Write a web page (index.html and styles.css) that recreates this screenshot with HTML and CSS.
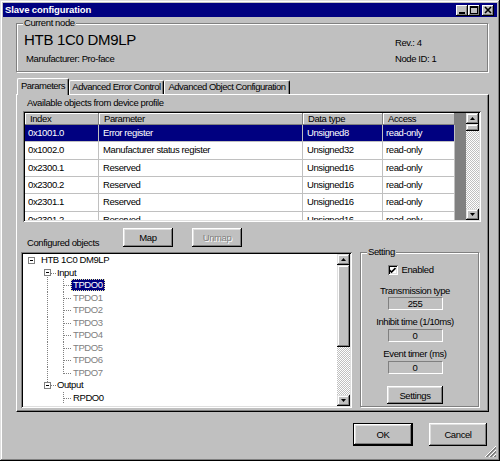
FILE: index.html
```html
<!DOCTYPE html>
<html>
<head>
<meta charset="utf-8">
<title>Slave configuration</title>
<link rel="stylesheet" href="styles.css">
</head>
<body>
<div class="window">
  <div class="titlebar">
    <span class="title">Slave configuration</span>
    <div class="caps">
      <span class="cap"><svg width="12" height="11" viewBox="0 0 12 11" shape-rendering="crispEdges"><rect x="3" y="7" width="6" height="2" fill="#000"/></svg></span>
      <span class="cap"><svg width="12" height="11" viewBox="0 0 12 11" shape-rendering="crispEdges"><rect x="2.5" y="1.5" width="7" height="7" fill="none" stroke="#000"/><rect x="2" y="1" width="8" height="2" fill="#000"/></svg></span>
      <span class="cap cap-close"><svg width="12" height="11" viewBox="0 0 12 11"><path d="M3 2 L9 8 M9 2 L3 8" stroke="#000" stroke-width="1.6" fill="none"/></svg></span>
    </div>
  </div>

  <div class="group node">
    <span class="legend">Current node</span>
    <div class="node-main">
      <div class="node-name">HTB 1C0 DM9LP</div>
      <div class="node-mfr">Manufacturer: Pro-face</div>
    </div>
    <div class="node-side">
      <div class="line">Rev.: 4</div>
      <div class="line node-id">Node ID: 1</div>
    </div>
  </div>

  <div class="tabs">
    <div class="tab active t1">Parameters</div>
    <div class="tab t2">Advanced Error Control</div>
    <div class="tab t3">Advanced Object Configuration</div>
  </div>

  <div class="panel">
    <div class="caption">Available objects from device profile</div>
    <div class="listview sunken">
      <div class="lv-body">
        <div class="lv-head">
          <div class="hc">Index</div>
          <div class="hc">Parameter</div>
          <div class="hc">Data type</div>
          <div class="hc">Access</div>
        </div>
        <div class="lv-row selected">
          <div class="c c1">0x1001.0</div><div class="c c2">Error register</div><div class="c c3">Unsigned8</div><div class="c c4">read-only</div>
        </div>
        <div class="lv-row">
          <div class="c c1">0x1002.0</div><div class="c c2">Manufacturer status register</div><div class="c c3">Unsigned32</div><div class="c c4">read-only</div>
        </div>
        <div class="lv-row">
          <div class="c c1">0x2300.1</div><div class="c c2">Reserved</div><div class="c c3">Unsigned16</div><div class="c c4">read-only</div>
        </div>
        <div class="lv-row">
          <div class="c c1">0x2300.2</div><div class="c c2">Reserved</div><div class="c c3">Unsigned16</div><div class="c c4">read-only</div>
        </div>
        <div class="lv-row">
          <div class="c c1">0x2301.1</div><div class="c c2">Reserved</div><div class="c c3">Unsigned16</div><div class="c c4">read-only</div>
        </div>
        <div class="lv-row">
          <div class="c c1">0x2301.2</div><div class="c c2">Reserved</div><div class="c c3">Unsigned16</div><div class="c c4">read-only</div>
        </div>
      </div>
      <div class="vscroll">
        <div class="sb-btn"><svg width="5" height="3" viewBox="0 0 5 3"><polygon points="0,3 2.5,0 5,3" fill="#000"/></svg></div>
        <div class="sb-thumb lv-thumb"></div>
        <div class="sb-track"></div>
        <div class="sb-btn"><svg width="5" height="3" viewBox="0 0 5 3"><polygon points="0,0 5,0 2.5,3" fill="#000"/></svg></div>
      </div>
    </div>

    <div class="lower">
      <div class="cfg-bar">
        <span class="cfg-label">Configured objects</span>
        <button class="btn btn-map">Map</button>
        <button class="btn btn-unmap" disabled>Unmap</button>
      </div>

      <div class="tree sunken">
        <div class="tree-items">
          <div class="ti"><span class="g"><i class="box"></i></span><span class="tl">HTB 1C0 DM9LP</span></div>
          <div class="ti"><span class="g"></span><span class="g g-box-down"><i class="box"></i></span><span class="tl">Input</span></div>
          <div class="ti"><span class="g"></span><span class="g g-v"></span><span class="g g-tee"></span><span class="tl sel">TPDO0</span></div>
          <div class="ti"><span class="g"></span><span class="g g-v"></span><span class="g g-tee"></span><span class="tl dim">TPDO1</span></div>
          <div class="ti"><span class="g"></span><span class="g g-v"></span><span class="g g-tee"></span><span class="tl dim">TPDO2</span></div>
          <div class="ti"><span class="g"></span><span class="g g-v"></span><span class="g g-tee"></span><span class="tl dim">TPDO3</span></div>
          <div class="ti"><span class="g"></span><span class="g g-v"></span><span class="g g-tee"></span><span class="tl dim">TPDO4</span></div>
          <div class="ti"><span class="g"></span><span class="g g-v"></span><span class="g g-tee"></span><span class="tl dim">TPDO5</span></div>
          <div class="ti"><span class="g"></span><span class="g g-v"></span><span class="g g-tee"></span><span class="tl dim">TPDO6</span></div>
          <div class="ti"><span class="g"></span><span class="g g-v"></span><span class="g g-ell"></span><span class="tl dim">TPDO7</span></div>
          <div class="ti"><span class="g"></span><span class="g g-box-up"><i class="box"></i></span><span class="tl">Output</span></div>
          <div class="ti"><span class="g"></span><span class="g"></span><span class="g g-tee"></span><span class="tl">RPDO0</span></div>
        </div>
        <div class="vscroll">
          <div class="sb-btn"><svg width="5" height="3" viewBox="0 0 5 3"><polygon points="0,3 2.5,0 5,3" fill="#000"/></svg></div>
          <div class="sb-thumb tree-thumb"></div>
          <div class="sb-track"></div>
          <div class="sb-btn"><svg width="5" height="3" viewBox="0 0 5 3"><polygon points="0,0 5,0 2.5,3" fill="#000"/></svg></div>
        </div>
      </div>

      <div class="group setting">
        <span class="legend">Setting</span>
        <div class="chk-row">
          <span class="chk"><svg width="7" height="7" viewBox="0 0 7 7"><path d="M0.5 3 L2.5 5 L6.5 1" stroke="#000" stroke-width="1.6" fill="none"/></svg></span>
          <span class="chk-text">Enabled</span>
        </div>
        <div class="st-label first">Transmission type</div>
        <div class="field">255</div>
        <div class="st-label">Inhibit time (1/10ms)</div>
        <div class="field">0</div>
        <div class="st-label">Event timer (ms)</div>
        <div class="field">0</div>
        <button class="btn btn-settings">Settings</button>
      </div>
    </div>
  </div>

  <div class="footer">
    <button class="btn btn-ok">OK</button>
    <button class="btn btn-cancel">Cancel</button>
  </div>

  <svg class="grip" width="12" height="12" viewBox="0 0 12 12" shape-rendering="crispEdges">
    <path d="M11 0 L0 11" stroke="#fff"/>
    <path d="M11 1 L1 11 M11 2 L2 11" stroke="#808080"/>
    <path d="M11 4 L4 11" stroke="#fff"/>
    <path d="M11 5 L5 11 M11 6 L6 11" stroke="#808080"/>
    <path d="M11 8 L8 11" stroke="#fff"/>
    <path d="M11 9 L9 11 M11 10 L10 11" stroke="#808080"/>
  </svg>
</div>
</body>
</html>
```

FILE: styles.css
```css
* { box-sizing: border-box; }

html, body {
  margin: 0;
  padding: 0;
  background: #c0c0c0;
}

body {
  font-family: "Liberation Sans", Arial, sans-serif;
  font-size: 9.5px;
  letter-spacing: -0.4px;
  color: #000;
  white-space: nowrap;
}

.window {
  position: relative;
  width: 500px;
  height: 461px;
  background: #c0c0c0;
  overflow: hidden;
  box-shadow: inset -1px -1px #000, inset 1px 1px #dfdfdf, inset -2px -2px #808080, inset 2px 2px #fff;
}

/* ---------- title bar ---------- */
.titlebar {
  margin: 3px 3px 0;
  height: 14px;
  background: #000080;
  display: flex;
  align-items: center;
  padding: 0 3px 0 2px;
}
.title {
  color: #fff;
  font-weight: bold;
  font-size: 9.5px;
  letter-spacing: -0.1px;
  line-height: 14px;
}
.caps {
  margin-left: auto;
  display: flex;
  align-items: center;
}
.cap {
  width: 12px;
  height: 11px;
  display: block;
  background: #c0c0c0;
  box-shadow: inset -1px -1px #000, inset 1px 1px #fff, inset -2px -2px #808080;
}
.cap svg { display: block; }
.cap-close { margin-left: 2px; }

/* ---------- group boxes ---------- */
.group {
  position: relative;
  border: 1px solid #808080;
  box-shadow: inset 1px 1px #fff, 1px 1px #fff;
}
.legend {
  position: absolute;
  top: -7px;
  left: 6px;
  padding: 0 1px;
  line-height: 12px;
  background: #c0c0c0;
}

.node {
  margin: 6px 12px 0 16px;
  height: 49px;
  display: flex;
}
.node-main {
  padding: 7px 0 0 7px;
}
.node-name {
  font-size: 15px;
  letter-spacing: -0.3px;
  line-height: 18px;
}
.node-mfr {
  margin-top: 4px;
  padding-left: 2px;
  line-height: 12px;
}
.node-side {
  margin-left: auto;
  width: 92px;
  padding-top: 13px;
}
.line { line-height: 12px; }
.node-id { margin-top: 4px; }

/* ---------- tabs ---------- */
.tabs {
  margin: 6px 0 0 17px;
  height: 16px;
  display: flex;
  align-items: flex-end;
}
.tab {
  height: 14px;
  line-height: 12px;
  text-align: center;
  letter-spacing: -0.5px;
  background: #c0c0c0;
  border-top: 1px solid #fff;
  border-left: 1px solid #fff;
  border-right: 1px solid #000;
  border-radius: 2px 2px 0 0;
  box-shadow: inset -1px 0 #808080;
}
.tab.active {
  position: relative;
  z-index: 1;
  height: 17px;
  margin-bottom: -1px;
  padding-top: 1px;
}
.t1 { width: 52px; }
.t2 { width: 95px; }
.t3 { width: 126px; }

/* ---------- tab panel ---------- */
.panel {
  margin-left: 16px;
  width: 473px;
  height: 318px;
  border-top: 1px solid #fff;
  border-left: 1px solid #fff;
  border-right: 1px solid #000;
  border-bottom: 1px solid #000;
  box-shadow: inset -1px -1px #808080;
}
.caption {
  margin: 2px 0 0 10px;
  line-height: 12px;
}

.sunken {
  padding: 2px;
  box-shadow: inset 1px 1px #808080, inset -1px -1px #fff, inset 2px 2px #000, inset -2px -2px #dfdfdf;
}

/* ---------- list view ---------- */
.listview {
  margin: 2px 0 0 6px;
  width: 458px;
  height: 111px;
  display: flex;
}
.lv-body {
  flex: 1;
  overflow: hidden;
  background: #808080;
}
.lv-head, .lv-row {
  display: grid;
  grid-template-columns: 74px 204px 80px 72px;
  width: 430px;
}
.lv-head { height: 12px; }
.hc {
  background: #c0c0c0;
  line-height: 12px;
  padding-left: 5px;
  box-shadow: inset -1px -1px #808080, inset 1px 1px #fff;
}
.lv-row {
  height: 17.33px;
  background: #fff;
}
.c {
  border-right: 1px solid #c0c0c0;
  border-bottom: 1px solid #c0c0c0;
  line-height: 16.33px;
  padding-left: 4px;
  overflow: hidden;
}
.c1, .c4 { padding-left: 3px; }
.lv-row.selected { background: #000080; color: #fff; }

/* ---------- scrollbars ---------- */
.vscroll {
  width: 13px;
  flex: none;
  display: flex;
  flex-direction: column;
}
.sb-btn, .sb-thumb {
  background: #c0c0c0;
  box-shadow: inset -1px -1px #000, inset 1px 1px #dfdfdf, inset -2px -2px #808080, inset 2px 2px #fff;
}
.sb-btn {
  height: 11px;
  flex: none;
  display: flex;
  align-items: center;
  justify-content: center;
}
.sb-btn svg { display: block; }
.lv-thumb { height: 7px; flex: none; }
.tree-thumb { height: 82px; flex: none; }
.sb-track {
  flex: 1;
  background: repeating-conic-gradient(#c0c0c0 0 25%, #fff 0 50%) 0 0 / 2px 2px;
}

/* ---------- lower area ---------- */
.lower {
  margin-left: 4px;
  display: grid;
  grid-template-columns: 331px 119px;
  grid-template-rows: 30px 156px;
  column-gap: 8px;
}
.cfg-bar {
  grid-column: 1 / span 2;
  display: flex;
  align-items: flex-start;
}
.cfg-label {
  width: 96px;
  margin: 15px 0 0 6px;
  line-height: 12px;
}

.btn {
  font: inherit;
  letter-spacing: inherit;
  color: #000;
  padding: 0;
  border: none;
  background: #c0c0c0;
  text-align: center;
  box-shadow: inset -1px -1px #000, inset 1px 1px #fff, inset -2px -2px #808080, inset 2px 2px #dfdfdf;
}
.btn-map {
  width: 50px;
  height: 19px;
  margin-top: 6px;
}
.btn-unmap {
  width: 50px;
  height: 19px;
  margin: 6px 0 0 19px;
  color: #808080;
  text-shadow: 1px 1px #fff;
}

/* ---------- tree ---------- */
.tree {
  display: flex;
  background: #fff;
  height: 156px;
}
.tree-items {
  flex: 1;
  padding-left: 1px;
  overflow: hidden;
}
.ti {
  height: 12.5px;
  display: flex;
  align-items: center;
}
.g {
  width: 16px;
  flex: none;
  align-self: stretch;
  display: flex;
  align-items: center;
  background-repeat: no-repeat;
}
.box {
  display: block;
  width: 7px;
  height: 7px;
  margin-left: 4px;
  border: 1px solid #808080;
  background: linear-gradient(#000, #000) center / 3px 1px no-repeat, #fff;
}
.g-v {
  background-image: repeating-linear-gradient(to bottom, #808080 0 1px, transparent 1px 2px);
  background-size: 1px 100%;
  background-position: 7px 0;
}
.g-tee {
  background-image:
    repeating-linear-gradient(to bottom, #808080 0 1px, transparent 1px 2px),
    repeating-linear-gradient(to right, #808080 0 1px, transparent 1px 2px);
  background-size: 1px 100%, 8px 1px;
  background-position: 7px 0, 8px 6px;
}
.g-ell {
  background-image:
    repeating-linear-gradient(to bottom, #808080 0 1px, transparent 1px 2px),
    repeating-linear-gradient(to right, #808080 0 1px, transparent 1px 2px);
  background-size: 1px 7px, 8px 1px;
  background-position: 7px 0, 8px 6px;
}
.g-box-down {
  background-image:
    repeating-linear-gradient(to bottom, #808080 0 1px, transparent 1px 2px),
    repeating-linear-gradient(to right, #808080 0 1px, transparent 1px 2px);
  background-size: 1px 4px, 5px 1px;
  background-position: 7px 100%, 11px 6px;
}
.g-box-up {
  background-image:
    repeating-linear-gradient(to bottom, #808080 0 1px, transparent 1px 2px),
    repeating-linear-gradient(to right, #808080 0 1px, transparent 1px 2px);
  background-size: 1px 3px, 5px 1px;
  background-position: 7px 0, 11px 6px;
}
.tl {
  line-height: 12px;
  padding: 0 2px;
  margin-left: -1px;
}
.tl.dim { color: #808080; }
.tl.sel {
  background: #000080;
  color: #fff;
  outline: 1px dotted #e8e8a0;
  outline-offset: -1px;
}

/* ---------- setting group ---------- */
.setting {
  height: 155px;
  display: flex;
  flex-direction: column;
  align-items: center;
  padding-right: 9px;
}
.chk-row {
  width: 55px;
  height: 12px;
  margin-top: 11px;
  display: flex;
  align-items: center;
}
.chk {
  width: 10px;
  height: 10px;
  flex: none;
  display: flex;
  align-items: center;
  justify-content: center;
  background: #fff;
  box-shadow: inset 1px 1px #808080, inset -1px -1px #fff, inset 2px 2px #000, inset -2px -2px #dfdfdf;
}
.chk svg { display: block; }
.chk-text {
  margin-left: 4px;
  line-height: 12px;
}
.st-label {
  line-height: 12px;
  margin-top: 5px;
}
.st-label.first { margin-top: 9px; }
.field + .st-label { margin-top: 6px; }
.field {
  width: 55px;
  height: 13px;
  line-height: 11px;
  text-align: center;
  border-top: 1px solid #808080;
  border-left: 1px solid #808080;
  border-bottom: 1px solid #fff;
  border-right: 1px solid #fff;
}
.st-label + .field { margin-top: 0; }
.st-label:not(.first) + .field { margin-top: 1px; }
.btn-settings {
  width: 56px;
  height: 18px;
  margin-top: 12px;
}

/* ---------- footer ---------- */
.footer {
  display: flex;
  justify-content: flex-end;
  gap: 16px;
  margin-top: 11px;
  padding-right: 13px;
}
.btn-ok {
  width: 60px;
  height: 23px;
  box-shadow: inset 0 0 0 1px #000, inset -2px -2px #000, inset 2px 2px #fff, inset -3px -3px #808080, inset 3px 3px #dfdfdf;
}
.btn-cancel {
  width: 58px;
  height: 23px;
}

.grip {
  position: absolute;
  right: 3px;
  bottom: 3px;
}
```
